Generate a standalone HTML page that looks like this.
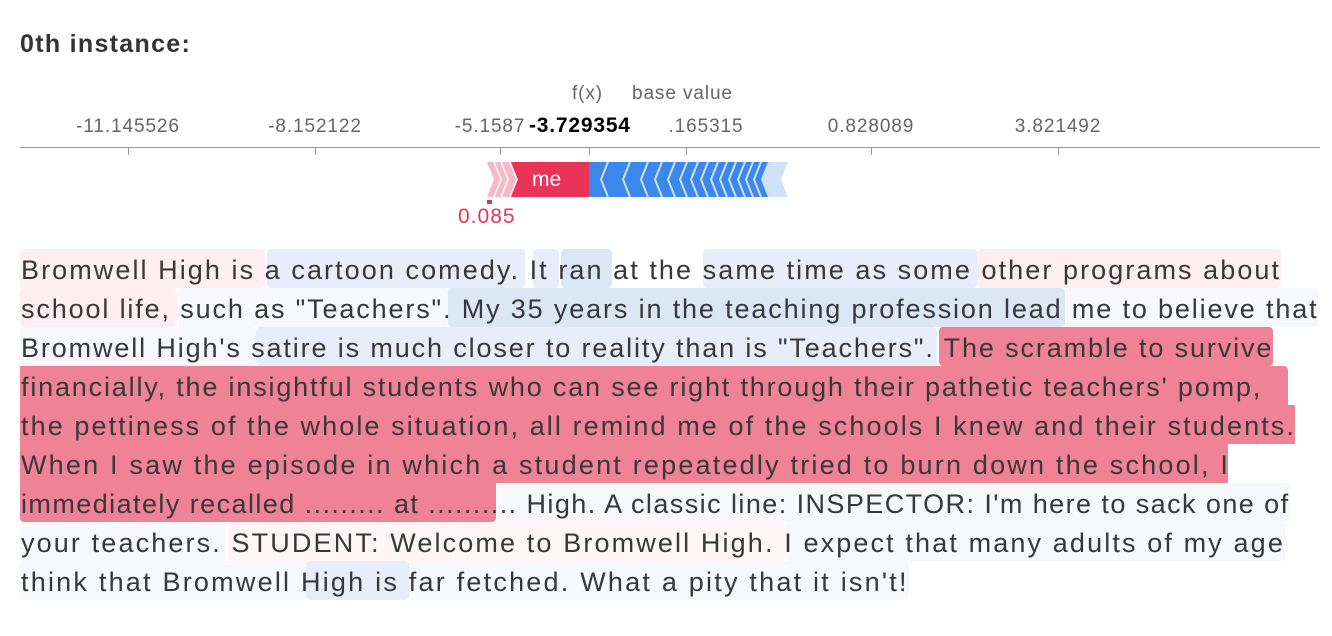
<!DOCTYPE html>
<html><head><meta charset="utf-8"><style>
body{margin:0;width:1332px;height:636px;background:#fff;position:relative;overflow:hidden;font-family:"Liberation Sans",sans-serif;}
.a{position:absolute}
.t{position:absolute;font-size:19px;letter-spacing:0.9px;color:#666;transform:translateX(-50%);top:116px;white-space:nowrap}
.tk{position:absolute;top:147px;width:1px;height:8px;background:#999}
.h{position:absolute;height:39px;border-radius:4px}
.ln{position:absolute;left:21px;font-size:27px;letter-spacing:1.75px;color:#383838;white-space:nowrap;line-height:39px}
.p{background:#fdeef1}.b{background:#e7eef9}.B{background:#dce7f6}.w{background:#f6f8fc}.r{background:#ef8297}
</style></head><body>
<div class="a" style="left:20px;top:30px;font-size:25px;letter-spacing:1.3px;font-weight:bold;color:#333">0th instance:</div>
<div class="a" style="left:20px;top:147px;width:1300px;height:1px;background:#999"></div>
<div class="t" style="left:128px">-11.145526</div>
<div class="t" style="left:315px">-8.152122</div>
<div class="t" style="left:490px">-5.1587</div>
<div class="t" style="left:706px">.165315</div>
<div class="t" style="left:871px">0.828089</div>
<div class="t" style="left:1058px">3.821492</div>
<div class="tk" style="left:128px"></div><div class="tk" style="left:315px"></div><div class="tk" style="left:500px"></div><div class="tk" style="left:589px"></div><div class="tk" style="left:686px"></div><div class="tk" style="left:871px"></div><div class="tk" style="left:1058px"></div>
<div class="a" style="left:528px;top:110px;width:124px;height:32px;background:#fff"></div>
<div class="a" style="left:529px;top:114px;font-size:21px;letter-spacing:0.8px;font-weight:bold;color:#000">-3.729354</div>
<div class="a" style="left:572px;top:83px;font-size:19px;letter-spacing:0.9px;color:#666">f(x)</div>
<div class="a" style="left:632px;top:83px;font-size:19px;letter-spacing:0.9px;color:#666">base value</div>
<div class="a" style="left:462px;top:162px;width:358px;height:35px;background:#fff"></div>
<svg class="a" style="left:480px;top:162px" width="320" height="35">
<polygon points="7,0 109,0 109,35 7,35 14,17.5" fill="#f5b9c6"/>
<polygon points="30,0 109,0 109,35 30,35 37,17.5" fill="#ea3358"/>
<g stroke="#fff" stroke-width="1.5" fill="none"><path d="M14,0 L21,17.5 L14,35M21,0 L28,17.5 L21,35M30,0 L37,17.5 L30,35"/></g>
<polygon points="109,0 308,0 301,17.5 308,35 109,35" fill="#d2e2f6"/>
<polygon points="109,0 290,0 283,17.5 290,35 109,35" fill="#3b87ec"/>
<g stroke="#cfe0f7" stroke-width="2" fill="none"><path d="M128,0 L121,17.5 L128,35M150,0 L143,17.5 L150,35M168,0 L161,17.5 L168,35M182,0 L175,17.5 L182,35M195,0 L188,17.5 L195,35M207,0 L200,17.5 L207,35M218,0 L211,17.5 L218,35M228,0 L221,17.5 L228,35M238,0 L231,17.5 L238,35M247,0 L240,17.5 L247,35M256,0 L249,17.5 L256,35M265,0 L258,17.5 L265,35M273,0 L266,17.5 L273,35M281,0 L274,17.5 L281,35M289,0 L282,17.5 L289,35"/></g>
<text x="52" y="24" font-size="21" fill="#fff" font-family="Liberation Sans">me</text>
</svg>
<div class="a" style="left:487px;top:200px;width:5px;height:4px;background:#ea3358"></div>
<div class="a" style="left:458px;top:205px;font-size:21px;letter-spacing:1px;color:#ea3358">0.085</div>

<div class="h p" style="left:20px;top:249px;width:245px"></div><div class="h b" style="left:267px;top:249px;width:258px"></div><div class="h b" style="left:533px;top:249px;width:26px"></div><div class="h B" style="left:561px;top:249px;width:51px"></div><div class="h b" style="left:703px;top:249px;width:274px"></div><div class="h p" style="left:977px;top:249px;width:304px"></div>
<div class="h p" style="left:20px;top:288px;width:157px"></div><div class="h w" style="left:178px;top:288px;width:270px"></div><div class="h B" style="left:448px;top:288px;width:617px"></div><div class="h w" style="left:1065px;top:288px;width:253px"></div>
<div class="h w" style="left:20px;top:327px;width:236px"></div><div class="h b" style="left:256px;top:327px;width:681px"></div><div class="h r" style="left:939px;top:327px;width:334px"></div>
<div class="h r" style="left:20px;top:366px;width:1268px;border-radius:0 4px 0 0"></div>
<div class="h r" style="left:20px;top:405px;width:1275px;border-radius:0"></div>
<div class="h r" style="left:20px;top:444px;width:1208px;border-radius:0"></div>
<div class="h r" style="left:20px;top:483px;width:476px;border-radius:0 0 4px 4px"></div><div class="h w" style="left:496px;top:483px;width:794px"></div>
<div class="h w" style="left:20px;top:522px;width:206px"></div><div class="h p" style="left:228px;top:522px;width:557px;opacity:.6"></div><div class="h w" style="left:785px;top:522px;width:500px"></div>
<div class="h w" style="left:20px;top:561px;width:286px"></div><div class="h b" style="left:306px;top:561px;width:103px"></div><div class="h w" style="left:409px;top:561px;width:500px"></div>

<div class="ln" style="top:251px;letter-spacing:2.07px">Bromwell High is a cartoon comedy. It ran at the same time as some other programs about</div>
<div class="ln" style="top:290px;letter-spacing:1.86px">school life, such as "Teachers". My 35 years in the teaching profession lead me to believe that</div>
<div class="ln" style="top:329px;letter-spacing:1.87px">Bromwell High's satire is much closer to reality than is "Teachers". The scramble to survive</div>
<div class="ln" style="top:368px;letter-spacing:1.82px">financially, the insightful students who can see right through their pathetic teachers' pomp,</div>
<div class="ln" style="top:407px;letter-spacing:2.09px">the pettiness of the whole situation, all remind me of the schools I knew and their students.</div>
<div class="ln" style="top:446px;letter-spacing:2.2px">When I saw the episode in which a student repeatedly tried to burn down the school, I</div>
<div class="ln" style="top:485px;letter-spacing:1.43px">immediately recalled ......... at .......... High. A classic line: INSPECTOR: I'm here to sack one of</div>
<div class="ln" style="top:524px;letter-spacing:2.13px">your teachers. STUDENT: Welcome to Bromwell High. I expect that many adults of my age</div>
<div class="ln" style="top:563px;letter-spacing:2.22px">think that Bromwell High is far fetched. What a pity that it isn't!</div>
</body></html>
